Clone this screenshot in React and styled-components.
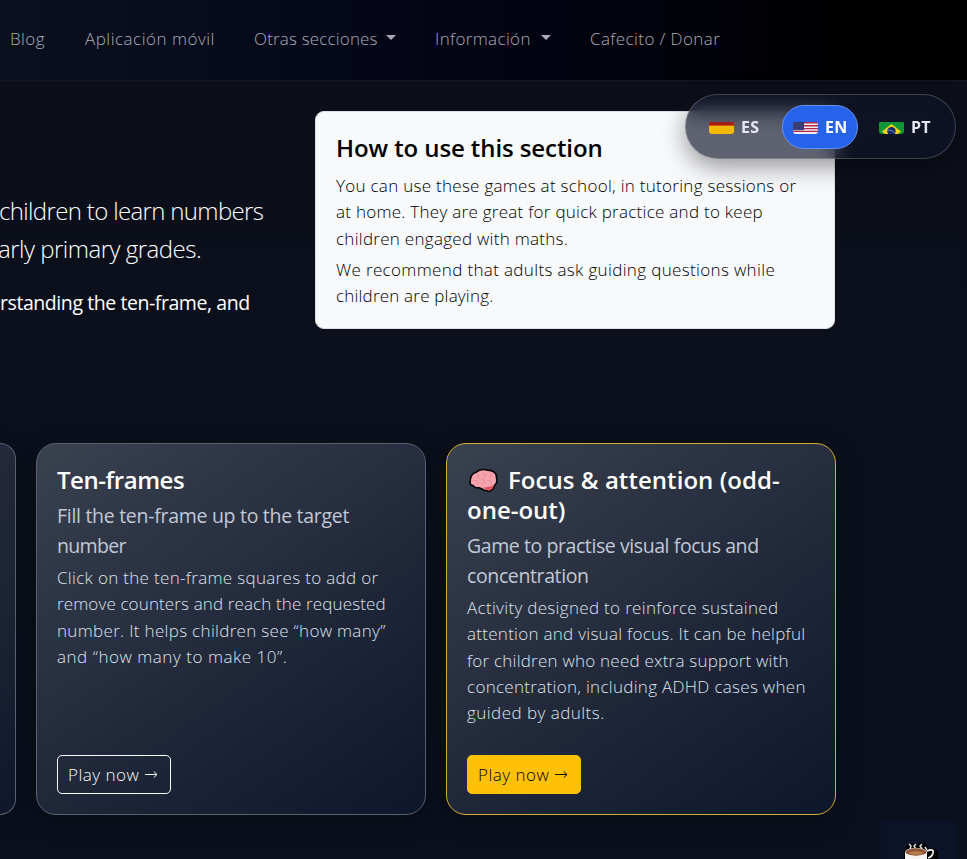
import React from 'react'
import styled, { createGlobalStyle } from 'styled-components'

const navItems = [
    { text: 'Blog', width: 35, gap: 40, ls: 0.4 },
    { text: 'Aplicación móvil', width: 130, gap: 39, ls: 0.5 },
    { text: 'Otras secciones', width: 123, gap: 39, ls: 0.17, caret: true },
    { text: 'Información', width: 97, gap: 39, ls: 0.35, caret: true },
    { text: 'Cafecito / Donar', width: 131, gap: 0, ls: 0.4 },
]

const howTo = [
    [
        { text: 'You can use these games at school, in tutoring sessions or', ls: 0.28 },
        { text: 'at home. They are great for quick practice and to keep', ls: 0.27 },
        { text: 'children engaged with maths.', ls: 0.28 },
    ],
    [
        { text: 'We recommend that adults ask guiding questions while', ls: 0.35 },
        { text: 'children are playing.', ls: 0.2 },
    ],
]

const cards = [
    {
        title: [{ text: 'Ten-frames', ls: -0.45 }],
        subtitle: [
            { text: 'Fill the ten-frame up to the target', ls: -0.29 },
            { text: 'number', ls: -0.65 },
        ],
        body: [
            { text: 'Click on the ten-frame squares to add or', ls: 0.32 },
            { text: 'remove counters and reach the requested', ls: 0.13 },
            { text: 'number. It helps children see “how many”', ls: 0.32 },
            { text: 'and “how many to make 10”.', ls: 0.54 },
        ],
    },
    {
        featured: true,
        title: [
            { text: 'Focus & attention (odd-', ls: 0.05, brain: true },
            { text: 'one-out)', ls: 0 },
        ],
        subtitle: [
            { text: 'Game to practise visual focus and', ls: -0.42 },
            { text: 'concentration', ls: -0.38 },
        ],
        body: [
            { text: 'Activity designed to reinforce sustained', ls: 0.32 },
            { text: 'attention and visual focus. It can be helpful', ls: 0.28 },
            { text: 'for children who need extra support with', ls: 0.23 },
            { text: 'concentration, including ADHD cases when', ls: 0.3 },
            { text: 'guided by adults.', ls: 0.47 },
        ],
    },
]

const Brain = () => (
    <BrainSvg viewBox="0 0 28 24">
        <path d="M1 14C1 9 3 5 7 4C10 1 15 1 18 2C23 2 27 5 26.5 9C27.5 12 27 15 24.5 17C24 21 20 23.500 17 22C14 22 12 19.500 10 19C7 19.500 5 18.500 4 17C2 17 1 16 1 14Z" fill="#f7a3ae" stroke="#08080a" strokeWidth="1.6" />
        <path d="M14 19C18 18 21 18 24 16.500C23.500 20 20 22.500 17 21Z" fill="#dd4f5c" />
        <path d="M8 6C10 7 10 8 9 10M14 3C13 5 14 7 17 7M20 5C22 6 22 8 20 10M4 12C7 11 9 13 8 15M12 11C15 10 16 13 13 15M18 12C21 12 23 14 21 16" fill="none" stroke="#df8591" strokeWidth="0.9" />
    </BrainSvg>
)

const FlagEs = () => (
    <Flag viewBox="0 0 25 12">
        <rect width="25" height="12" fill="#f3b90a" />
        <rect width="25" height="3.6" fill="#a51d16" />
    </Flag>
)

const FlagUs = () => (
    <Flag viewBox="0 0 25 12">
        <rect width="25" height="12" fill="#f1eef2" />
        <path d="M11 .8H25M11 3.8H25M11 6.6H25M0 9.4H25" stroke="#b3264a" strokeWidth="1.4" />
        <rect width="11" height="8.2" fill="#353b72" />
        <path d="M1 2H10M1 4.500H10M1 7H10" stroke="#5b6090" strokeWidth=".6" strokeDasharray="1 1" />
    </Flag>
)

const FlagBr = () => (
    <Flag viewBox="0 0 25 12">
        <rect width="25" height="12" fill="#119637" />
        <path d="M12.500 2L22 9.500L19 12H6L3 9.500Z" fill="#f5d314" />
        <circle cx="12.5" cy="9.3" r="4.2" fill="#16296e" />
        <path d="M9 8Q13 7.500 16 11" fill="none" stroke="#9bb5c8" strokeWidth=".7" />
    </Flag>
)

const Cup = () => (
    <CupSvg viewBox="0 0 36 18">
        <path d="M2 9L6 1L23 0L27 6L32 5L36 9V18H2Z" fill="#000" />
        <path d="M8 6L9 3L7 1M14 6L12 3L14 1M20 6L18 3L20 1M25 7L23 4" fill="none" stroke="#e9e9ea" strokeWidth="1.4" />
        <path d="M3 9Q4 5 14 5Q24 5 25 9V18H3Z" fill="#f5f4f3" />
        <ellipse cx="14" cy="9" rx="10.5" ry="3.7" fill="#8b5536" />
        <ellipse cx="14" cy="10" rx="7" ry="1.7" fill="#ba7c4d" />
        <path d="M25 8Q32 5 31 10Q30 14 26 15" fill="none" stroke="#f5f4f3" strokeWidth="1.7" />
    </CupSvg>
)

const Lines = ({ lines }) => lines.map((line) => (
    <Line key={line.text} $ls={line.ls}>
        {line.brain && <Brain />}
        {line.text}
    </Line>
))

const GameCard = ({ data }) => (
    <Card $featured={data.featured}>
        <CardTitle><Lines lines={data.title} /></CardTitle>
        <CardSubtitle><Lines lines={data.subtitle} /></CardSubtitle>
        <CardText><Lines lines={data.body} /></CardText>
        <PlayButton $featured={data.featured}>
            Play now
            <svg width="13" height="9" viewBox="0 0 13 9">
                <path d="M0 4.500H12M8.800 1.500L12 4.500L8.800 7.500" fill="none" stroke="currentColor" />
            </svg>
        </PlayButton>
    </Card>
)

const App = () => (
    <Page>
        <GlobalStyle />
        <Nav>
            {navItems.map((item) => (
                <NavLink key={item.text} $gap={item.gap}>
                    <NavText $width={item.width} $ls={item.ls}>{item.text}</NavText>
                    {item.caret && <Caret />}
                </NavLink>
            ))}
        </Nav>

        <Hero>
            <Intro>
                <LeadText>
                    <Line $ls={-0.65} $shift={-1}>children to learn numbers</Line>
                    <Line $ls={-0.5} $shift={-2}>arly primary grades.</Line>
                </LeadText>
                <Strong><Line $ls={-0.43}>rstanding the ten-frame, and</Line></Strong>
            </Intro>
            <HowTo>
                <HowToTitle><Line $ls={-0.09}>How to use this section</Line></HowToTitle>
                {howTo.map((lines, i) => (
                    <HowToText key={i}><Lines lines={lines} /></HowToText>
                ))}
            </HowTo>
        </Hero>

        <Cards>
            <CutCard />
            {cards.map((card) => <GameCard key={card.title[0].text} data={card} />)}
        </Cards>

        <Languages>
            <Language $inset={12}><FlagEs />ES</Language>
            <Language $inset={10} $active><FlagUs />EN</Language>
            <Language $inset={10}><FlagBr />PT</Language>
        </Languages>
        <Coffee><Cup /></Coffee>
    </Page>
)

const GlobalStyle = createGlobalStyle`
* {
    box-sizing: border-box;
}
body {
    margin: 0;
    background: #0b0f1a;
    overflow: hidden;
}
p, h2, h3 {
    margin: 0;
}
`

const Page = styled.div`
height: 859px;
overflow: hidden;
background: linear-gradient(180deg, #0c0f1a 0%, #0a101d 100%);
font-family: 'Open Sans', 'Noto Sans', sans-serif;
font-size: 17px;
font-weight: 300;
color: #fff;
`

const Nav = styled.nav`
display: flex;
align-items: center;
height: 81px;
padding: 0 0 3px 10px;
background: linear-gradient(90deg, #0b1020 0%, #020414 50%, #000 90%);
border-bottom: 1px solid #12151d;
`

const NavLink = styled.div`
display: flex;
align-items: center;
margin-right: ${({ $gap }) => $gap}px;
color: #a9acb8;
`

const NavText = styled.span`
width: ${({ $width }) => $width}px;
white-space: nowrap;
letter-spacing: ${({ $ls }) => $ls}px;
`

const Caret = styled.span`
margin: 0 0 2px 9px;
border-top: 5px solid currentColor;
border-left: 5px solid transparent;
border-right: 5px solid transparent;
`

const Line = styled.span`
display: block;
white-space: nowrap;
letter-spacing: ${({ $ls }) => $ls}px;
margin-left: ${({ $shift }) => $shift || 0}px;
`

const Hero = styled.section`
display: flex;
height: 332px;
padding-top: 30px;
`

const Intro = styled.div`
width: 315px;
padding-top: 81px;
`

const LeadText = styled.p`
font-size: 24px;
line-height: 38px;
`

const Strong = styled.p`
margin-top: 20px;
font-size: 19.5px;
line-height: 30px;
font-weight: 400;
`

const HowTo = styled.aside`
width: 520px;
height: 218px;
padding: 21px 20px;
border: 1px solid #dfe1e5;
border-radius: 9px;
background: #f8f9fb;
color: #000;
`

const HowToTitle = styled.h2`
font-size: 24px;
line-height: 30px;
font-weight: 600;
margin-bottom: 10px;
`

const HowToText = styled.p`
line-height: 26.3px;
margin-bottom: 5px;
`

const Cards = styled.section`
display: flex;
gap: 20px;
margin-top: 30px;
`

const Card = styled.article`
display: flex;
flex-direction: column;
align-items: flex-start;
width: 390px;
height: 372px;
padding: 21px 20px 20px;
border: 1px solid ${({ $featured }) => ($featured ? '#d3ac31' : '#596172')};
border-radius: 20px;
background: linear-gradient(145deg, #3a4250 0%, #20283a 55%, #0e162b 100%);
box-shadow: 0 8px 24px rgba(0, 0, 0, 0.25);
`

const CutCard = styled(Card)`
width: 16px;
padding: 0;
border-left: 0;
border-radius: 0 20px 20px 0;
background: linear-gradient(180deg, #23283a 0%, #1a2334 50%, #10172b 100%);
`

const CardTitle = styled.h3`
font-size: 24px;
line-height: 30px;
font-weight: 600;
`

const CardSubtitle = styled.p`
margin-top: 6px;
font-size: 19.5px;
line-height: 30px;
font-weight: 400;
color: #c2c8d5;
`

const CardText = styled.p`
margin-top: 4px;
line-height: 26.3px;
color: #dfe3eb;
`

const PlayButton = styled.button`
display: flex;
align-items: center;
gap: 6px;
width: 114px;
height: 39px;
margin-top: auto;
padding: 0 0 0 10px;
border: 1px solid ${({ $featured }) => ($featured ? '#ffc107' : '#f8f9fa')};
border-radius: 5px;
background: ${({ $featured }) => ($featured ? '#ffc107' : 'transparent')};
color: ${({ $featured }) => ($featured ? '#000' : '#f8f9fa')};
font: inherit;
letter-spacing: 0.5px;
white-space: nowrap;
`

const BrainSvg = styled.svg`
width: 29px;
height: 25px;
margin: 0 10px 0 2px;
vertical-align: -4px;
`

const Languages = styled.div`
position: fixed;
top: 94px;
left: 685px;
display: flex;
align-items: center;
gap: 10px;
width: 271px;
height: 65px;
padding: 0 10px;
border: 1px solid rgba(255, 255, 255, 0.2);
border-radius: 33px;
background: rgba(15, 20, 40, 0.66);
backdrop-filter: blur(10px);
box-shadow: 0 8px 24px rgba(0, 0, 0, 0.4);
`

const Language = styled.div`
display: flex;
align-items: center;
gap: 7px;
width: 76px;
height: 44px;
padding-left: ${({ $inset }) => $inset}px;
border: 1px solid ${({ $active }) => ($active ? '#6490f0' : 'transparent')};
border-radius: 22px;
background: ${({ $active }) => ($active ? '#2563eb' : 'transparent')};
color: ${({ $active }) => ($active ? '#fff' : '#e5e7f0')};
font-size: 16px;
font-weight: 700;
letter-spacing: 0.3px;
`

const Flag = styled.svg`
width: 25px;
height: 12px;
margin-top: 3px;
border-radius: 1px 1px 3px 3px;
flex-shrink: 0;
`

const Coffee = styled.div`
position: fixed;
top: 822px;
left: 881px;
width: 74px;
height: 37px;
padding: 21px 0 0 21px;
background: #0a1328;
overflow: hidden;
`

const CupSvg = styled.svg`
display: block;
width: 36px;
height: 18px;
`

export default App
